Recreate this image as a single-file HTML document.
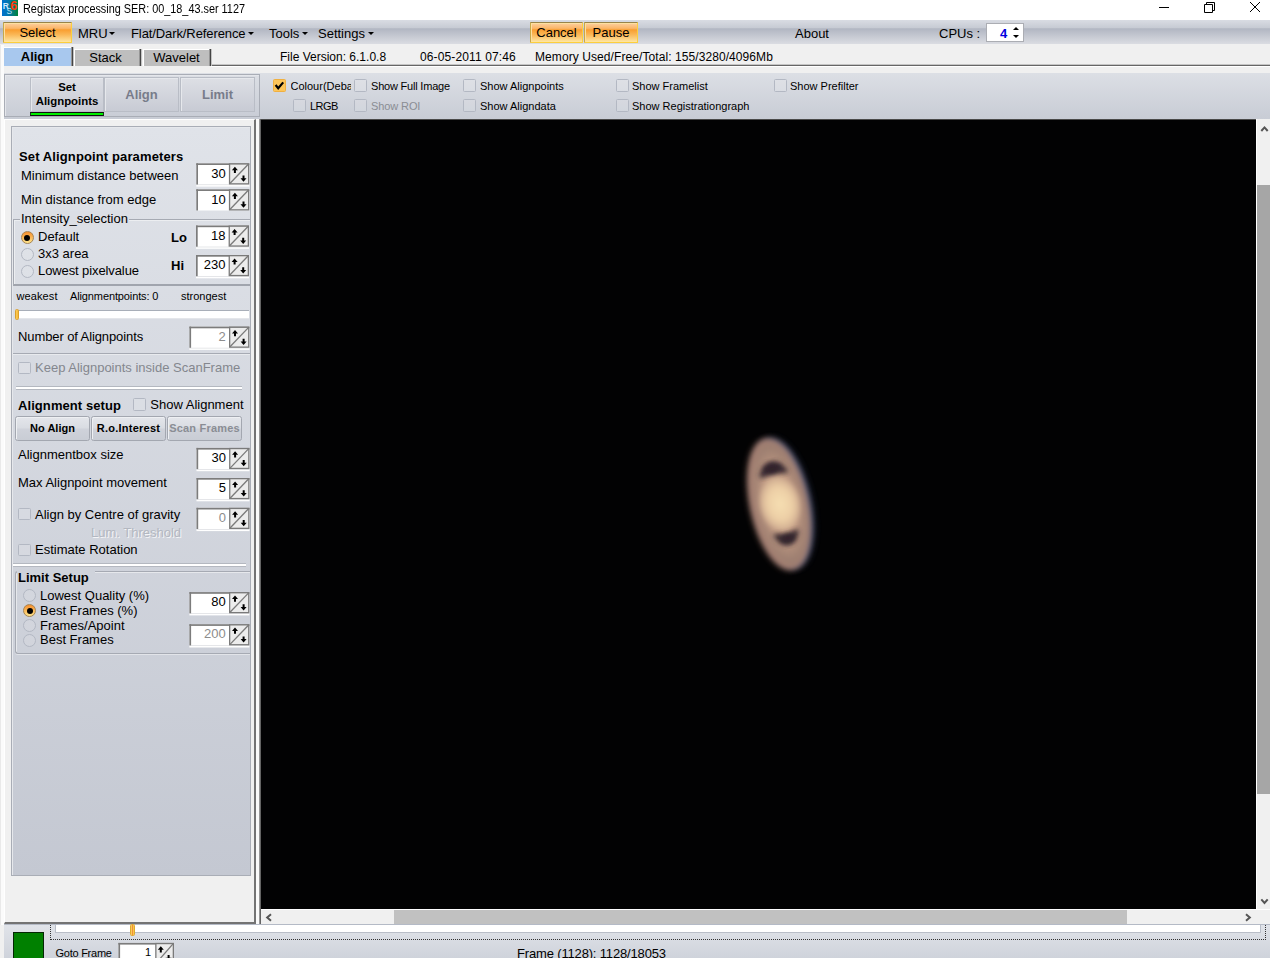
<!DOCTYPE html>
<html><head><meta charset="utf-8"><title>Registax</title>
<style>
*{box-sizing:border-box;margin:0;padding:0}
html,body{width:1270px;height:958px;overflow:hidden}
body{position:relative;background:#f0f0f0;font-family:"Liberation Sans",Arial,sans-serif;font-size:13px;color:#000;}
.a{position:absolute;white-space:nowrap}
.t13{font-size:13px;line-height:15px}
.t12{font-size:12px;line-height:14px}
.t11{font-size:11px;line-height:13px}
.b{font-weight:bold}
#title{left:0;top:0;width:1270px;height:20px;background:#fff}
#menu{left:0;top:20px;width:1270px;height:24px;background:linear-gradient(#d9dce3 0,#c6cad3 34%,#b1b6c2 36%,#d9dbe1 98%,#e8e8ec 100%)}
.obtn{border:1px solid #fccf3c;border-top-color:#9a8448;border-left-color:#c8a848;border-radius:1px;background:linear-gradient(#fdd0a0 0,#fbb668 28%,#f99e30 36%,#fab858 62%,#fee6a2 100%);box-shadow:inset 1px 1px 0 #fde0a0;text-align:center;font-size:13px;line-height:20px;height:21px}
.arr{width:0;height:0;border-left:3px solid transparent;border-right:3px solid transparent;border-top:3px solid #000}
.cb{width:12.4px;height:12.4px;margin:.3px 0 0 .3px;border:1px solid #b3b8c3;background:rgba(255,255,255,.13);border-radius:1.5px}
.tbtn{border:1px solid #b9bdc6;box-shadow:inset 1px 1px 0 #e6e8ec;text-align:center;background:linear-gradient(#dddfe5,#c8cbd4)}
.rd{width:13px;height:13px;border-radius:50%;border:1px solid #b3b8c3;background:rgba(255,255,255,.10)}
.rd.on{background:linear-gradient(#f68e2c,#fbb858 50%,#ffe68e);border-color:#a58555}
.rd.on::after{content:"";position:absolute;left:2.5px;top:2.5px;width:6px;height:6px;border-radius:50%;background:#000}
.pbtn{height:25px;border:1px solid #a3a7b0;border-radius:2.5px;background:linear-gradient(#e4e6eb 0,#d9dce2 48%,#cfd2da 52%,#c9cdd5 100%);box-shadow:inset 1px 1px 0 #eef0f3;font-size:11px;font-weight:bold;text-align:center;line-height:23px}
.spf{background:#fff;border-top:1.7px solid #7c7c7c;border-left:1.7px solid #7c7c7c;box-shadow:0 0 0 0 #fff}
.spb{background:#ececec;box-shadow:inset 0 0 0 1.3px #7a7a7a;margin-top:-1.7px}
</style></head><body>

<div class="a" id="title">
  <svg class="a" style="left:2px;top:0" width="16" height="16" viewBox="0 0 16 16">
    <defs><linearGradient id="ig" x1="0" y1="0" x2="1" y2="0"><stop offset="0" stop-color="#0070d0"/><stop offset="0.45" stop-color="#0478a8"/><stop offset="1" stop-color="#008238"/></linearGradient></defs>
    <rect x="0" y="0" width="16" height="16" fill="url(#ig)"/>
    <text x="0.8" y="9" font-family="Liberation Sans" font-size="8.5" font-weight="bold" fill="#cfeaff">R</text>
    <text x="4.6" y="14" font-family="Liberation Sans" font-size="8.5" fill="#b8e0fa">S</text>
    <text x="8.3" y="10" font-family="Liberation Sans" font-size="12.5" font-weight="bold" fill="#ff3a08">6</text>
  </svg>
  <div class="a t12" style="left:23px;top:2px;transform:scaleX(.905);transform-origin:0 0">Registax processing SER: 00_18_43.ser 1127</div>
  <svg class="a" style="left:1150px;top:0" width="120" height="20" viewBox="0 0 120 20" fill="none" stroke="#000" stroke-width="1">
    <path d="M9 7.5H19"/>
    <path d="M54.5 4.5H62.5V12.5H54.5Z M56.5 4.5V2.5H64.5V10.5H62.5"/>
    <path d="M100 2L110 12M110 2L100 12"/>
  </svg>
</div>
<div class="a" id="menu">
  <div class="a obtn" style="left:3px;top:2px;width:69px">Select</div>
  <div class="a t13" style="left:78px;top:6px">MRU</div><div class="a arr" style="left:109px;top:12px"></div>
  <div class="a t13" style="left:131px;top:6px;letter-spacing:-0.1px">Flat/Dark/Reference</div><div class="a arr" style="left:248px;top:12px"></div>
  <div class="a t13" style="left:269px;top:6px">Tools</div><div class="a arr" style="left:302px;top:12px"></div>
  <div class="a t13" style="left:318px;top:6px">Settings</div><div class="a arr" style="left:368px;top:12px"></div>
  <div class="a obtn" style="left:530px;top:2px;width:53px">Cancel</div>
  <div class="a obtn" style="left:584px;top:2px;width:54px">Pause</div>
  <div class="a t13" style="left:795px;top:6px">About</div>
  <div class="a t13" style="left:939px;top:6px">CPUs :</div>
  <div class="a" style="left:986px;top:3px;width:38px;height:19px;background:#fff;border:1px solid #abadb3"></div>
  <div class="a t13 b" style="left:1000px;top:6px;color:#0000e0">4</div>
  <div class="a arr" style="left:1012.5px;top:15px;border-left-width:3.2px;border-right-width:3.2px;border-top-width:3.4px"></div>
  <div class="a arr" style="left:1012.5px;top:7px;border-left-width:3.2px;border-right-width:3.2px;border-top:none;border-bottom:3.4px solid #000"></div>
</div>

<!-- tab row -->
<div class="a" style="left:211px;top:64px;width:1059px;height:3px;background:#666;border-top:1px solid #c4c4c4;border-bottom:1px solid #fff"></div>
<div class="a t13 b" style="left:2px;top:47px;width:70px;height:19px;background:#a8c8ee;text-align:center;line-height:18px;border-left:1px solid #fff;border-top:1px solid #fff;text-indent:-1px">Align</div>
<div class="a" style="left:71px;top:47px;width:3px;height:19px;background:linear-gradient(90deg,#959595 1px,#444 1px,#444 2px,#c2c2c2 2px)"></div>
<div class="a t13" style="left:74px;top:49px;width:65px;height:17px;background:#bebebe;text-align:center;line-height:16px;border-left:1px solid #fff;border-top:1px solid #fff;text-indent:-3px">Stack</div>
<div class="a" style="left:139px;top:49px;width:3px;height:17px;background:linear-gradient(90deg,#959595 1px,#444 1px,#444 2px,#c2c2c2 2px)"></div>
<div class="a t13" style="left:143px;top:49px;width:66px;height:17px;background:#bebebe;text-align:center;line-height:16px;border-left:1px solid #fff;border-top:1px solid #fff">Wavelet</div>
<div class="a" style="left:209px;top:49px;width:3px;height:17px;background:linear-gradient(90deg,#959595 1px,#444 1px,#444 2px,#c2c2c2 2px)"></div>
<div class="a t12" style="left:280px;top:50px">File Version: 6.1.0.8</div>
<div class="a t12" style="left:420px;top:50px;letter-spacing:0.12px">06-05-2011 07:46</div>
<div class="a t12" style="left:535px;top:50px;letter-spacing:0.08px">Memory Used/Free/Total: 155/3280/4096Mb</div>
<!-- toolbar -->
<div class="a" style="left:0;top:73px;width:1270px;height:46px;background:linear-gradient(#dcdfe5,#c8ccd5)"></div>
<div class="a" style="left:0;top:73px;width:4px;height:46px;background:#f0f0f0"></div>
<div class="a" id="tb" style="left:0;top:68px;width:1270px;height:51px">
  <div class="a" style="left:4px;top:6px;width:256px;height:43px;border:1px solid #a9adb6;box-shadow:inset 1px 1px 0 #e4e6eb"></div>
  <div class="a tbtn b" style="left:30px;top:9px;width:74px;height:35px;font-size:11.4px;line-height:14px;padding-top:2px">Set<br>Alignpoints</div>
  <div class="a" style="left:30px;top:43.6px;width:74.3px;height:4.6px;background:#00f000;border:1px solid #1a3a1a;border-top-color:#111;border-bottom-color:#111"></div>
  <div class="a tbtn b" style="left:104px;top:9px;width:75px;height:35px;font-size:13px;line-height:33px;color:#787c8a">Align</div>
  <div class="a tbtn b" style="left:180px;top:9px;width:75px;height:35px;font-size:13px;line-height:33px;color:#787c8a">Limit</div>
  <div class="a cb" style="left:273px;top:11px;background:#fcc55a;border-color:#f0b040"></div>
  <svg class="a" style="left:273px;top:11px" width="13" height="13" viewBox="0 0 13 13"><path d="M2.6 6L5.2 9.3L10.2 3.4" fill="none" stroke="#000" stroke-width="2.2"/></svg>
  <div class="a t11" style="left:290.5px;top:12px;width:60px;overflow:hidden">Colour(Debayer)</div>
  <div class="a cb" style="left:354px;top:11px"></div><div class="a t11" style="left:371px;top:12px;letter-spacing:-0.2px">Show Full Image</div>
  <div class="a cb" style="left:463px;top:11px"></div><div class="a t11" style="left:480px;top:12px">Show Alignpoints</div>
  <div class="a cb" style="left:616px;top:11px"></div><div class="a t11" style="left:632px;top:12px">Show Framelist</div>
  <div class="a cb" style="left:774px;top:11px"></div><div class="a t11" style="left:790px;top:12px">Show Prefilter</div>
  <div class="a cb" style="left:293px;top:31px"></div><div class="a t11" style="left:310px;top:32px;letter-spacing:-0.5px">LRGB</div>
  <div class="a cb" style="left:354px;top:31px"></div><div class="a t11" style="left:371px;top:32px;color:#8a8d94;letter-spacing:-0.1px">Show ROI</div>
  <div class="a cb" style="left:463px;top:31px"></div><div class="a t11" style="left:480px;top:32px">Show Aligndata</div>
  <div class="a cb" style="left:616px;top:31px"></div><div class="a t11" style="left:632px;top:32px">Show Registrationgraph</div>
</div>

<!-- left panel -->
<div class="a" style="left:0;top:45px;width:4px;height:913px;background:linear-gradient(90deg,#e9e9e9 1px,#fbfbfb 1px)"></div>
<div class="a" style="left:4px;top:119px;width:252px;height:805px;border-left:1px solid #fff;border-top:1px solid #fff;border-right:2px solid #737373;border-bottom:2px solid #737373;background:#f0f0f0"></div>
<div class="a" style="left:256px;top:119px;width:3px;height:805px;background:#fafafa"></div>
<div class="a" style="left:259px;top:119px;width:2px;height:805px;background:linear-gradient(90deg,#b0b0b0,#4a4a4a)"></div>
<div class="a" id="lp" style="left:11px;top:126px;width:240px;height:750px;background:linear-gradient(#e0e3e9,#c4c8d2);border:1px solid #a9adb6;box-shadow:inset 1px 1px 0 #e6e8ec"></div>
<svg class="a" style="left:0;top:0" width="262" height="958" viewBox="0 0 262 958"><rect x="196.3" y="163.3" width="53" height="23.3" fill="#fff"/><rect x="196.3" y="184.5" width="53" height="0.6" fill="#d4d6da"/><rect x="196.3" y="163.3" width="53" height="1.7" fill="#7c7c7c"/><rect x="196.3" y="163.3" width="1.7" height="21.2" fill="#7c7c7c"/><rect x="229.55" y="163.95" width="19.10" height="19.90" fill="#ececec" stroke="#7a7a7a" stroke-width="1.3"/><g transform="translate(228.90,163.30)"><path d="M1 20.2L19.4 1" stroke="#7a7a7a" stroke-width="1.3" fill="none"/><path d="M6 3.4L9 6.9H7V9.6H5V6.9H3Z M14.6 18.4L11.6 14.9H13.6V12.2H15.6V14.9H17.6Z" fill="#000"/></g><rect x="196.3" y="189.3" width="53" height="21.2" fill="#fff"/><rect x="196.3" y="189.3" width="53" height="1.7" fill="#7c7c7c"/><rect x="196.3" y="189.3" width="1.7" height="21.2" fill="#7c7c7c"/><rect x="229.55" y="189.95" width="19.10" height="19.90" fill="#ececec" stroke="#7a7a7a" stroke-width="1.3"/><g transform="translate(228.90,189.30)"><path d="M1 20.2L19.4 1" stroke="#7a7a7a" stroke-width="1.3" fill="none"/><path d="M6 3.4L9 6.9H7V9.6H5V6.9H3Z M14.6 18.4L11.6 14.9H13.6V12.2H15.6V14.9H17.6Z" fill="#000"/></g><rect x="196" y="225.5" width="53" height="23.3" fill="#fff"/><rect x="196" y="246.7" width="53" height="0.6" fill="#d4d6da"/><rect x="196" y="225.5" width="53" height="1.7" fill="#7c7c7c"/><rect x="196" y="225.5" width="1.7" height="21.2" fill="#7c7c7c"/><rect x="229.25" y="226.15" width="19.10" height="19.90" fill="#ececec" stroke="#7a7a7a" stroke-width="1.3"/><g transform="translate(228.60,225.50)"><path d="M1 20.2L19.4 1" stroke="#7a7a7a" stroke-width="1.3" fill="none"/><path d="M6 3.4L9 6.9H7V9.6H5V6.9H3Z M14.6 18.4L11.6 14.9H13.6V12.2H15.6V14.9H17.6Z" fill="#000"/></g><rect x="196" y="255" width="53" height="23.3" fill="#fff"/><rect x="196" y="276.2" width="53" height="0.6" fill="#d4d6da"/><rect x="196" y="255" width="53" height="1.7" fill="#7c7c7c"/><rect x="196" y="255" width="1.7" height="21.2" fill="#7c7c7c"/><rect x="229.25" y="255.65" width="19.10" height="19.90" fill="#ececec" stroke="#7a7a7a" stroke-width="1.3"/><g transform="translate(228.60,255.00)"><path d="M1 20.2L19.4 1" stroke="#7a7a7a" stroke-width="1.3" fill="none"/><path d="M6 3.4L9 6.9H7V9.6H5V6.9H3Z M14.6 18.4L11.6 14.9H13.6V12.2H15.6V14.9H17.6Z" fill="#000"/></g><rect x="189.4" y="326.6" width="60" height="23.3" fill="#fff"/><rect x="189.4" y="347.8" width="60" height="0.6" fill="#d4d6da"/><rect x="189.4" y="326.6" width="60" height="1.7" fill="#7c7c7c"/><rect x="189.4" y="326.6" width="1.7" height="21.2" fill="#7c7c7c"/><rect x="229.65" y="327.25" width="19.10" height="19.90" fill="#ececec" stroke="#7a7a7a" stroke-width="1.3"/><g transform="translate(229.00,326.60)"><path d="M1 20.2L19.4 1" stroke="#7a7a7a" stroke-width="1.3" fill="none"/><path d="M6 3.4L9 6.9H7V9.6H5V6.9H3Z M14.6 18.4L11.6 14.9H13.6V12.2H15.6V14.9H17.6Z" fill="#000"/></g><rect x="196.5" y="447.9" width="53" height="23.3" fill="#fff"/><rect x="196.5" y="469.09999999999997" width="53" height="0.6" fill="#d4d6da"/><rect x="196.5" y="447.9" width="53" height="1.7" fill="#7c7c7c"/><rect x="196.5" y="447.9" width="1.7" height="21.2" fill="#7c7c7c"/><rect x="229.75" y="448.55" width="19.10" height="19.90" fill="#ececec" stroke="#7a7a7a" stroke-width="1.3"/><g transform="translate(229.10,447.90)"><path d="M1 20.2L19.4 1" stroke="#7a7a7a" stroke-width="1.3" fill="none"/><path d="M6 3.4L9 6.9H7V9.6H5V6.9H3Z M14.6 18.4L11.6 14.9H13.6V12.2H15.6V14.9H17.6Z" fill="#000"/></g><rect x="196.5" y="478" width="53" height="23.3" fill="#fff"/><rect x="196.5" y="499.2" width="53" height="0.6" fill="#d4d6da"/><rect x="196.5" y="478" width="53" height="1.7" fill="#7c7c7c"/><rect x="196.5" y="478" width="1.7" height="21.2" fill="#7c7c7c"/><rect x="229.75" y="478.65" width="19.10" height="19.90" fill="#ececec" stroke="#7a7a7a" stroke-width="1.3"/><g transform="translate(229.10,478.00)"><path d="M1 20.2L19.4 1" stroke="#7a7a7a" stroke-width="1.3" fill="none"/><path d="M6 3.4L9 6.9H7V9.6H5V6.9H3Z M14.6 18.4L11.6 14.9H13.6V12.2H15.6V14.9H17.6Z" fill="#000"/></g><rect x="196.5" y="507.8" width="53" height="23.3" fill="#fff"/><rect x="196.5" y="529.0" width="53" height="0.6" fill="#d4d6da"/><rect x="196.5" y="507.8" width="53" height="1.7" fill="#7c7c7c"/><rect x="196.5" y="507.8" width="1.7" height="21.2" fill="#7c7c7c"/><rect x="229.75" y="508.45" width="19.10" height="19.90" fill="#ececec" stroke="#7a7a7a" stroke-width="1.3"/><g transform="translate(229.10,507.80)"><path d="M1 20.2L19.4 1" stroke="#7a7a7a" stroke-width="1.3" fill="none"/><path d="M6 3.4L9 6.9H7V9.6H5V6.9H3Z M14.6 18.4L11.6 14.9H13.6V12.2H15.6V14.9H17.6Z" fill="#000"/></g><rect x="189.4" y="592.1" width="60" height="23.3" fill="#fff"/><rect x="189.4" y="613.3000000000001" width="60" height="0.6" fill="#d4d6da"/><rect x="189.4" y="592.1" width="60" height="1.7" fill="#7c7c7c"/><rect x="189.4" y="592.1" width="1.7" height="21.2" fill="#7c7c7c"/><rect x="229.65" y="592.75" width="19.10" height="19.90" fill="#ececec" stroke="#7a7a7a" stroke-width="1.3"/><g transform="translate(229.00,592.10)"><path d="M1 20.2L19.4 1" stroke="#7a7a7a" stroke-width="1.3" fill="none"/><path d="M6 3.4L9 6.9H7V9.6H5V6.9H3Z M14.6 18.4L11.6 14.9H13.6V12.2H15.6V14.9H17.6Z" fill="#000"/></g><rect x="189.4" y="624.2" width="60" height="23.3" fill="#fff"/><rect x="189.4" y="645.4000000000001" width="60" height="0.6" fill="#d4d6da"/><rect x="189.4" y="624.2" width="60" height="1.7" fill="#7c7c7c"/><rect x="189.4" y="624.2" width="1.7" height="21.2" fill="#7c7c7c"/><rect x="229.65" y="624.85" width="19.10" height="19.90" fill="#ececec" stroke="#7a7a7a" stroke-width="1.3"/><g transform="translate(229.00,624.20)"><path d="M1 20.2L19.4 1" stroke="#7a7a7a" stroke-width="1.3" fill="none"/><path d="M6 3.4L9 6.9H7V9.6H5V6.9H3Z M14.6 18.4L11.6 14.9H13.6V12.2H15.6V14.9H17.6Z" fill="#000"/></g></svg>
<div class="a t13 b" style="left:19px;top:149px;letter-spacing:0.12px">Set Alignpoint parameters</div>
<div class="a t13" style="left:21px;top:168px;">Minimum distance between</div>
<div class="a t13" style="left:196.3px;top:166px;width:29.400000000000002px;text-align:right;color:#000">30</div>
<div class="a t13" style="left:21px;top:192px;">Min distance from edge</div>
<div class="a t13" style="left:196.3px;top:192px;width:29.400000000000002px;text-align:right;color:#000">10</div>
<div class="a" style="left:13px;top:219px;width:237px;height:67px;border:1px solid #a6aab3;border-right:none;border-bottom:2px solid #a0a4ad;box-shadow:inset 1px 1px 0 #eceef1"></div>
<div class="a t13" style="left:20px;top:211px;background:#dcdfe5;padding:0 1px">Intensity_selection</div>
<div class="a rd on" style="left:20.8px;top:231.0px"></div>
<div class="a t13" style="left:38px;top:229px;">Default</div>
<div class="a rd" style="left:20.8px;top:247.7px"></div>
<div class="a t13" style="left:38px;top:246px;">3x3 area</div>
<div class="a rd" style="left:20.8px;top:264.7px"></div>
<div class="a t13" style="left:38px;top:263px;letter-spacing:-0.1px">Lowest pixelvalue</div>
<div class="a t13 b" style="left:171px;top:230px;">Lo</div>
<div class="a t13 b" style="left:171px;top:258px;">Hi</div>
<div class="a t13" style="left:196px;top:228px;width:29.400000000000002px;text-align:right;color:#000">18</div>
<div class="a t13" style="left:196px;top:257px;width:29.400000000000002px;text-align:right;color:#000">230</div>
<div class="a" style="left:13px;top:286px;width:237px;height:68px;border-bottom:1px solid #a6aab3;box-shadow:0 1px 0 #e8eaee"></div>
<div class="a t11" style="left:16.5px;top:290px;letter-spacing:0.1px">weakest</div>
<div class="a t11" style="left:70px;top:290px;letter-spacing:-0.12px">Alignmentpoints: 0</div>
<div class="a t11" style="left:181px;top:290px;">strongest</div>
<div class="a" style="left:16.4px;top:310.4px;width:233px;height:8.6px;background:#fff;border-top:1px solid #a8aeb8;border-bottom:1px solid #e4e6ea"></div>
<div class="a" style="left:15.4px;top:309.2px;width:4px;height:11.2px;background:linear-gradient(90deg,#f9cc5a,#f7b93a);border:1px solid #dca02a;border-radius:1.5px"></div>
<div class="a t13" style="left:18px;top:329px;letter-spacing:-0.1px">Number of Alignpoints</div>
<div class="a t13" style="left:189.4px;top:329px;width:36.4px;text-align:right;color:#8c8c8c">2</div>
<div class="a cb" style="left:18px;top:361.5px"></div>
<div class="a t13" style="left:35px;top:360px;color:#84878e">Keep Alignpoints inside ScanFrame</div>
<div class="a" style="left:16.4px;top:386px;width:225.6px;height:4px;background:#fff;border:1px solid #b4b8c0;border-left:none;border-right:none"></div>
<div class="a t13 b" style="left:18px;top:398px;letter-spacing:0.08px">Alignment setup</div>
<div class="a cb" style="left:133px;top:398px"></div>
<div class="a t13" style="left:150.3px;top:397px;">Show Alignment</div>
<div class="a pbtn" style="left:15px;top:416px;width:75px">No Align</div>
<div class="a pbtn" style="left:91px;top:416px;width:75px;letter-spacing:0.25px">R.o.Interest</div>
<div class="a pbtn" style="left:167px;top:416px;width:75px;color:#8a8d94;letter-spacing:0.2px">Scan Frames</div>
<div class="a t13" style="left:18px;top:447px;">Alignmentbox size</div>
<div class="a t13" style="left:196.5px;top:450px;width:29.400000000000002px;text-align:right;color:#000">30</div>
<div class="a t13" style="left:18px;top:475px;">Max Alignpoint movement</div>
<div class="a t13" style="left:196.5px;top:480px;width:29.400000000000002px;text-align:right;color:#000">5</div>
<div class="a cb" style="left:18px;top:507.5px"></div>
<div class="a t13" style="left:35px;top:507px;">Align by Centre of gravity</div>
<div class="a t13" style="left:196.5px;top:510px;width:29.400000000000002px;text-align:right;color:#8c8c8c">0</div>
<div class="a t13" style="left:91px;top:525px;color:#b3b7c0;text-shadow:1px 1px 0 #f4f5f7">Lum. Threshold</div>
<div class="a cb" style="left:18px;top:543.3px"></div>
<div class="a t13" style="left:35px;top:542px;">Estimate Rotation</div>
<div class="a" style="left:12.7px;top:563px;width:233.6px;height:4px;background:#fff;border:1px solid #b4b8c0;border-left:none;border-right:none"></div>
<div class="a" style="left:15px;top:570.5px;width:235px;height:83px;border:1px solid #a6aab3;border-right:none;border-radius:3px 0 0 3px;box-shadow:inset 1px 1px 0 #e6e8ec, 0 1px 0 #e2e4e9"></div>
<div class="a t13 b" style="left:17px;top:570px;background:#cfd3db;padding:0 6px 0 1px;height:13px;line-height:15px">Limit Setup</div>
<div class="a rd" style="left:23.2px;top:589.1px"></div>
<div class="a t13" style="left:40px;top:588px;">Lowest Quality (%)</div>
<div class="a rd on" style="left:23.2px;top:604.0px"></div>
<div class="a t13" style="left:40px;top:603px;">Best Frames (%)</div>
<div class="a rd" style="left:23.2px;top:618.8px"></div>
<div class="a t13" style="left:40px;top:618px;">Frames/Apoint</div>
<div class="a rd" style="left:23.2px;top:634.1px"></div>
<div class="a t13" style="left:40px;top:632px;">Best Frames</div>
<div class="a t13" style="left:189.4px;top:594px;width:36.4px;text-align:right;color:#000">80</div>
<div class="a t13" style="left:189.4px;top:626px;width:36.4px;text-align:right;color:#8c8c8c">200</div>
<!-- image -->
<div class="a" style="left:261px;top:119px;width:995px;height:790px;background:#020203;overflow:hidden;box-shadow:inset 0 1px 0 #4a4a4a">
<svg width="995" height="790" viewBox="261 119 995 790" style="display:block">
  <defs>
    <filter id="bl1" x="-50%" y="-50%" width="200%" height="200%"><feGaussianBlur stdDeviation="3.6"/></filter>
    <filter id="bl2" x="-50%" y="-50%" width="200%" height="200%"><feGaussianBlur stdDeviation="2.4"/></filter>
    <radialGradient id="gb" cx="0.5" cy="0.5" r="0.5"><stop offset="0" stop-color="#f6dfb2"/><stop offset="0.6" stop-color="#edcfa6"/><stop offset="1" stop-color="#cfac90"/></radialGradient>
    <radialGradient id="gr" cx="0.5" cy="0.5" r="0.5"><stop offset="0" stop-color="#d0aa8e"/><stop offset="0.55" stop-color="#be9882"/><stop offset="1" stop-color="#94786c"/></radialGradient>
  </defs>
  <g transform="translate(780,504) rotate(-12)">
    <ellipse cx="2.5" cy="0" rx="28.5" ry="66" fill="#4a5a88" filter="url(#bl1)" opacity="0.85"/>
    <ellipse cx="-1.5" cy="0" rx="28" ry="66" fill="#c48f78" filter="url(#bl1)" opacity="0.9"/>
    <ellipse cx="0" cy="0" rx="26.5" ry="64" fill="url(#gr)" filter="url(#bl1)"/>
    <ellipse cx="0" cy="0" rx="20" ry="27" fill="url(#gb)" filter="url(#bl2)"/>
    <path d="M-12.5 -31 Q-8 -41 0 -41.5 Q8 -41 12.5 -31 Q0 -35 -12.5 -31Z" fill="#382a32" stroke="#382a32" stroke-width="4" stroke-linejoin="round" filter="url(#bl2)"/>
    <ellipse cx="-0.5" cy="-36" rx="8" ry="4.5" fill="#30232b" filter="url(#bl2)"/>
    <path d="M-11 30 Q-7 40 0 40.5 Q7 40 11 30 Q0 34.5 -11 30Z" fill="#382a32" stroke="#382a32" stroke-width="3.6" stroke-linejoin="round" filter="url(#bl2)"/>
    <ellipse cx="0.5" cy="35" rx="7" ry="4" fill="#30232b" filter="url(#bl2)"/>
  </g>
</svg>
</div>
<!-- v scroll -->
<div class="a" style="left:1256px;top:119px;width:14px;height:790px;background:#f0f0f0;border-left:1px solid #fff"></div>
<div class="a" style="left:1257px;top:185px;width:13px;height:609px;background:#a6a6a6"></div>
<svg class="a" style="left:1256px;top:119px" width="14" height="790" viewBox="0 0 14 790" fill="none" stroke="#555" stroke-width="2"><path d="M5.3 12L8.5 8.4L11.7 12"/><path d="M5.3 780.3L8.5 783.9L11.7 780.3"/></svg>
<!-- h scroll -->
<div class="a" style="left:261px;top:909px;width:1009px;height:15px;background:#f0f0f0;border-top:1px solid #fff"></div>
<div class="a" style="left:394px;top:910px;width:733px;height:14px;background:#c1c1c1"></div>
<svg class="a" style="left:261px;top:909px" width="995" height="16" viewBox="0 0 995 16" fill="none" stroke="#555" stroke-width="2"><path d="M10 5.3L6.2 8.5L10 11.7"/><path d="M985 5.3L988.8 8.5L985 11.7"/></svg>
<!-- bottom -->
<div class="a" style="left:4px;top:924px;width:1266px;height:1px;background:#b4bac6"></div>
<div class="a" id="bot" style="left:0;top:925px;width:1270px;height:33px;background:linear-gradient(90deg,#f0f0f0 4px,transparent 4px),linear-gradient(#e0e3e9,#cfd3db)">
  <div class="a" style="left:13px;top:7px;width:31px;height:30px;background:#008000;border:1px solid #042604"></div>
  <div class="a" style="left:50px;top:0;width:1216px;height:15px;border:1px dotted #333;border-top:none"></div>
  <div class="a" style="left:55px;top:0;width:1206px;height:8px;background:#fff;border:1px solid #b9bec8;border-top:none"></div>
  <div class="a" style="left:130.4px;top:-1px;width:4.4px;height:11.6px;background:linear-gradient(90deg,#f9cc5a 35%,#f0903a 35%,#f0903a 65%,#f9c648 65%);border:1px solid #e0a830;border-radius:1.5px"></div>
  <div class="a t11" style="left:55.5px;top:22px;letter-spacing:-0.25px">Goto Frame</div>
  <div class="a t13" style="left:517px;top:21px;letter-spacing:-0.16px">Frame (1128): 1128/18053</div>
</div>
<svg class="a" style="left:0;top:925px" width="262" height="33" viewBox="0 925 262 33"><rect x="118.4" y="942.9" width="55.6" height="23.3" fill="#fff"/><rect x="118.4" y="942.9" width="55.6" height="1.7" fill="#7c7c7c"/><rect x="118.4" y="942.9" width="1.7" height="21.2" fill="#7c7c7c"/><rect x="155.85" y="943.55" width="17.50" height="19.90" fill="#ececec" stroke="#7a7a7a" stroke-width="1.3"/><g transform="translate(155.20,942.90)"><path d="M1 20.2L17.8 1" stroke="#7a7a7a" stroke-width="1.3" fill="none"/><path d="M5.6 3.4L8.6 6.9H6.6V9.6H4.6V6.9H2.6Z M13.4 18.4L10.4 14.9H12.4V12.2H14.4V14.9H16.4Z" fill="#000"/></g></svg><div class="a t11" style="left:119px;top:946px;width:32px;text-align:right">1</div>
</body></html>
